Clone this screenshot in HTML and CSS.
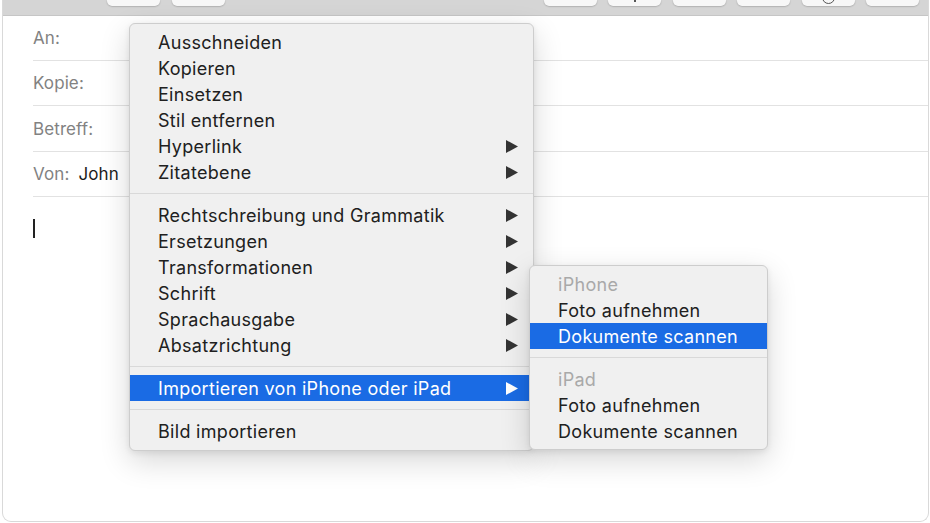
FILE: index.html
```html
<!DOCTYPE html>
<html lang="de">
<head>
<meta charset="utf-8">
<title>Mail</title>
<link rel="stylesheet" href="styles.css">
</head>
<body>
<div class="window">
  <div class="toolbar">
    <div class="tb-group tb-left">
      <div class="tb-btn"></div>
      <div class="tb-btn"></div>
    </div>
    <div class="tb-group tb-right">
      <div class="tb-btn"></div>
      <div class="tb-btn"><span class="ic-stem"></span></div>
      <div class="tb-btn"></div>
      <div class="tb-btn"></div>
      <div class="tb-btn"><span class="ic-ring"></span></div>
      <div class="tb-btn"></div>
    </div>
  </div>

  <div class="fields">
    <div class="field f1"><span class="label">An:</span></div>
    <div class="field"><span class="label">Kopie:</span></div>
    <div class="field f3"><span class="label">Betreff:</span></div>
    <div class="field"><span class="label">Von:</span><span class="value">John</span></div>
  </div>
  <div class="body">
    <span class="caret"></span>
  </div>

  <div class="menu main-menu">
    <div class="item">Ausschneiden</div>
    <div class="item">Kopieren</div>
    <div class="item">Einsetzen</div>
    <div class="item">Stil entfernen</div>
    <div class="item has-sub">Hyperlink<svg class="arrow" viewBox="0 0 12 13"><polygon points="0,0 12,6.5 0,13"/></svg></div>
    <div class="item has-sub">Zitatebene<svg class="arrow" viewBox="0 0 12 13"><polygon points="0,0 12,6.5 0,13"/></svg></div>
    <div class="sep"></div>
    <div class="item has-sub">Rechtschreibung und Grammatik<svg class="arrow" viewBox="0 0 12 13"><polygon points="0,0 12,6.5 0,13"/></svg></div>
    <div class="item has-sub">Ersetzungen<svg class="arrow" viewBox="0 0 12 13"><polygon points="0,0 12,6.5 0,13"/></svg></div>
    <div class="item has-sub">Transformationen<svg class="arrow" viewBox="0 0 12 13"><polygon points="0,0 12,6.5 0,13"/></svg></div>
    <div class="item has-sub">Schrift<svg class="arrow" viewBox="0 0 12 13"><polygon points="0,0 12,6.5 0,13"/></svg></div>
    <div class="item has-sub">Sprachausgabe<svg class="arrow" viewBox="0 0 12 13"><polygon points="0,0 12,6.5 0,13"/></svg></div>
    <div class="item has-sub">Absatzrichtung<svg class="arrow" viewBox="0 0 12 13"><polygon points="0,0 12,6.5 0,13"/></svg></div>
    <div class="sep"></div>
    <div class="item has-sub active">Importieren von iPhone oder iPad<svg class="arrow" viewBox="0 0 12 13"><polygon points="0,0 12,6.5 0,13"/></svg></div>
    <div class="sep"></div>
    <div class="item">Bild importieren</div>
  </div>

  <div class="menu sub-menu">
    <div class="item heading">iPhone</div>
    <div class="item">Foto aufnehmen</div>
    <div class="item active">Dokumente scannen</div>
    <div class="sep"></div>
    <div class="item heading">iPad</div>
    <div class="item">Foto aufnehmen</div>
    <div class="item">Dokumente scannen</div>
  </div>
</div>
</body>
</html>
```

FILE: styles.css
```css
* { box-sizing: border-box; }

html, body {
  margin: 0;
  padding: 0;
  background: #ffffff;
}

body {
  font-family: "Inter", "Liberation Sans", sans-serif;
  -webkit-font-smoothing: antialiased;
}

.window {
  position: relative;
  width: 927px;
  height: 522px;
  margin-left: 2px;
  background: #ffffff;
  border: 1px solid #d9d9d9;
  border-top: none;
  border-radius: 0 0 9px 9px;
  overflow: hidden;
}

/* toolbar */
.toolbar {
  display: flex;
  justify-content: space-between;
  align-items: flex-start;
  height: 16px;
  background: #d5d5d5;
  border-bottom: 1px solid #c6c6c6;
  padding: 0 9px 0 104px;
}

.tb-group {
  display: flex;
  gap: 11.5px;
}

.tb-left { gap: 12px; }

.tb-btn {
  display: flex;
  justify-content: center;
  width: 53px;
  height: 6px;
  background: #f7f7f7;
  border-radius: 0 0 5px 5px;
  box-shadow: 0 0.5px 1.5px rgba(0, 0, 0, 0.28);
  overflow: hidden;
}

.ic-stem {
  width: 2px;
  height: 2px;
  background: #555;
}

.ic-ring {
  width: 13px;
  height: 13px;
  margin-top: -9px;
  border: 1.6px solid #555;
  border-radius: 50%;
}

/* header fields */
.fields {
  padding-left: 30px;
}

.field {
  display: flex;
  align-items: center;
  gap: 9px;
  height: 45px;
  border-bottom: 1px solid #e2e2e2;
  font-size: 17px;
  letter-spacing: 0.1px;
}

.field.f3 { height: 46px; }

.label { color: #828282; }
.value { color: #1c1c1c; }

.body {
  padding: 22px 0 0 30px;
}

.caret {
  display: block;
  width: 2px;
  height: 19px;
  background: #222;
}

/* menus */
.menu {
  position: absolute;
  background: #f0f0f0;
  border: 1px solid #cdcdcd;
  border-radius: 6px;
  box-shadow: 0 10px 30px rgba(0, 0, 0, 0.16), 0 2px 6px rgba(0, 0, 0, 0.08);
  padding: 5px 0;
  color: #202020;
  font-size: 18px;
  letter-spacing: 0.3px;
}

.main-menu {
  left: 126px;
  top: 23px;
  width: 405px;
  height: 428px;
}

.sub-menu {
  left: 526px;
  top: 265px;
  width: 239px;
  height: 185px;
}

.item {
  display: flex;
  align-items: center;
  justify-content: space-between;
  height: 26px;
  padding: 0 15px 0 28px;
  white-space: nowrap;
}

.item.heading { color: #a9a9a9; }

.item.active {
  background: #1a6be4;
  color: #ffffff;
}

.arrow {
  width: 12px;
  height: 13px;
  fill: #333333;
}

.item.active .arrow { fill: #ffffff; }

.sep {
  height: 1px;
  margin: 8px 0;
  background: #d9d9d9;
}
```
